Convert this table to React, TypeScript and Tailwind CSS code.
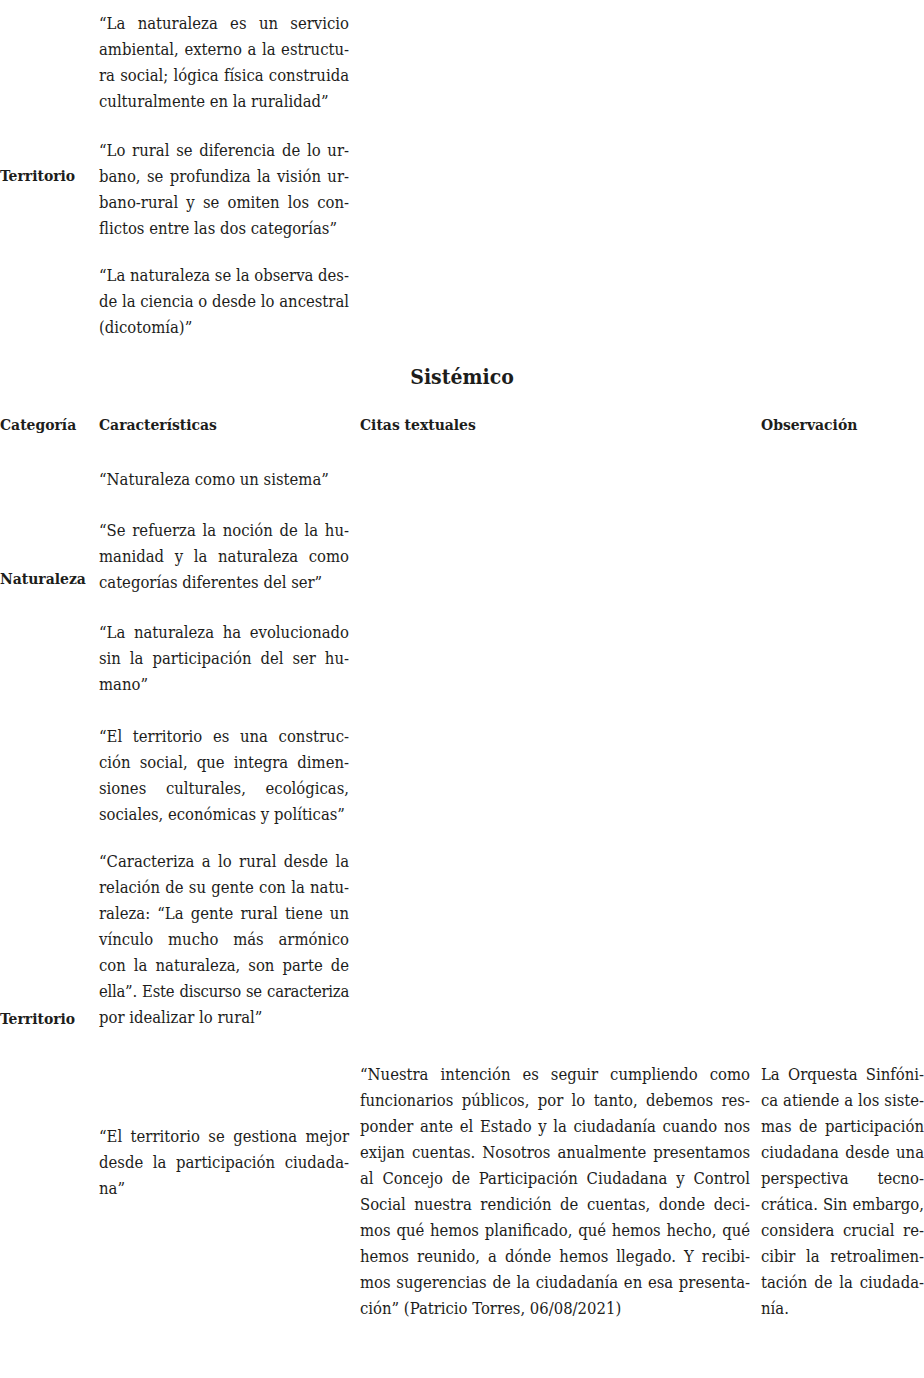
const serif = "font-['DejaVu_Serif_Condensed','Liberation_Serif',serif]";

function Para({ lines, className = "" }: { lines: string[]; className?: string }) {
  return (
    <div className={className}>
      {lines.map((l, i) => (
        <div
          key={i}
          className={`whitespace-nowrap ${
            i < lines.length - 1 ? "text-justify [text-align-last:justify]" : ""
          } ${l.startsWith("ella") ? "tracking-[-0.25px]" : ""}`}
        >
          {l}
        </div>
      ))}
    </div>
  );
}

const top1 = [
  "“La naturaleza es un servicio",
  "ambiental, externo a la estructu-",
  "ra social; lógica física construida",
  "culturalmente en la ruralidad”",
];
const top2 = [
  "“Lo rural se diferencia de lo ur-",
  "bano, se profundiza la visión ur-",
  "bano-rural y se omiten los con-",
  "flictos entre las dos categorías”",
];
const top3 = [
  "“La naturaleza se la observa des-",
  "de la ciencia o desde lo ancestral",
  "(dicotomía)”",
];

const n1 = ["“Naturaleza como un sistema”"];
const n2 = [
  "“Se refuerza la noción de la hu-",
  "manidad y la naturaleza como",
  "categorías diferentes del ser”",
];
const n3 = [
  "“La naturaleza ha evolucionado",
  "sin la participación del ser hu-",
  "mano”",
];
const t1 = [
  "“El territorio es una construc-",
  "ción social, que integra dimen-",
  "siones culturales, ecológicas,",
  "sociales, económicas y políticas”",
];
const t2 = [
  "“Caracteriza a lo rural desde la",
  "relación de su gente con la natu-",
  "raleza: “La gente rural tiene un",
  "vínculo mucho más armónico",
  "con la naturaleza, son parte de",
  "ella”. Este discurso se caracteriza",
  "por idealizar lo rural”",
];
const t3 = [
  "“El territorio se gestiona mejor",
  "desde la participación ciudada-",
  "na”",
];
const cita = [
  "“Nuestra intención es seguir cumpliendo como",
  "funcionarios públicos, por lo tanto, debemos res-",
  "ponder ante el Estado y la ciudadanía cuando nos",
  "exijan cuentas. Nosotros anualmente presentamos",
  "al Concejo de Participación Ciudadana y Control",
  "Social nuestra rendición de cuentas, donde deci-",
  "mos qué hemos planificado, qué hemos hecho, qué",
  "hemos reunido, a dónde hemos llegado. Y recibi-",
  "mos sugerencias de la ciudadanía en esa presenta-",
  "ción” (Patricio Torres, 06/08/2021)",
];
const obs = [
  "La Orquesta Sinfóni-",
  "ca atiende a los siste-",
  "mas de participación",
  "ciudadana desde una",
  "perspectiva tecno-",
  "crática. Sin embargo,",
  "considera crucial re-",
  "cibir la retroalimen-",
  "tación de la ciudada-",
  "nía.",
];

const cols = "grid grid-cols-[88px_250px_390px_163px] gap-x-[11px]";

export default function App() {
  return (
    <div className={`${serif} min-h-[1378px] w-[924px] bg-white text-[16.5px] leading-[26px] text-[#1d1d1b]`}>
      {/* previous block, Territorio */}
      <div className={`${cols} pt-[11px]`}>
        <div className="col-start-1 row-start-1 row-span-3 self-center text-[15.5px] font-bold">Territorio</div>
        <Para lines={top1} className="col-start-2 row-start-1 pb-[23px]" />
        <Para lines={top2} className="col-start-2 row-start-2 pb-[21px]" />
        <Para lines={top3} className="col-start-2 row-start-3" />
      </div>

      <h2 className="mt-[22px] text-center text-[21px] font-bold leading-[28px]">Sistémico</h2>

      <div className={`${cols} mt-[21px] [&>.h]:text-[15.5px] [&>.h]:font-bold`}>
        <div className="h col-start-1 row-start-1">Categoría</div>
        <div className="h col-start-2 row-start-1">Características</div>
        <div className="h col-start-3 row-start-1">Citas textuales</div>
        <div className="h col-start-4 row-start-1">Observación</div>

        <div className="h col-start-1 row-start-2 row-span-3 self-center pt-[22px]">Naturaleza</div>
        <Para lines={n1} className="col-start-2 row-start-2 pt-[29px]" />
        <Para lines={n2} className="col-start-2 row-start-3 pt-[25px]" />
        <Para lines={n3} className="col-start-2 row-start-4 pt-[24px]" />

        <div className="h col-start-1 row-start-5 row-span-3 self-center pb-[8px] pt-[26px]">Territorio</div>
        <Para lines={t1} className="col-start-2 row-start-5 pt-[26px]" />
        <Para lines={t2} className="col-start-2 row-start-6 pt-[21px]" />
        <Para lines={t3} className="col-start-2 row-start-7 pt-[93px]" />
        <Para lines={cita} className="col-start-3 row-start-7 pt-[31px]" />
        <Para lines={obs} className="col-start-4 row-start-7 pt-[31px]" />
      </div>
    </div>
  );
}
